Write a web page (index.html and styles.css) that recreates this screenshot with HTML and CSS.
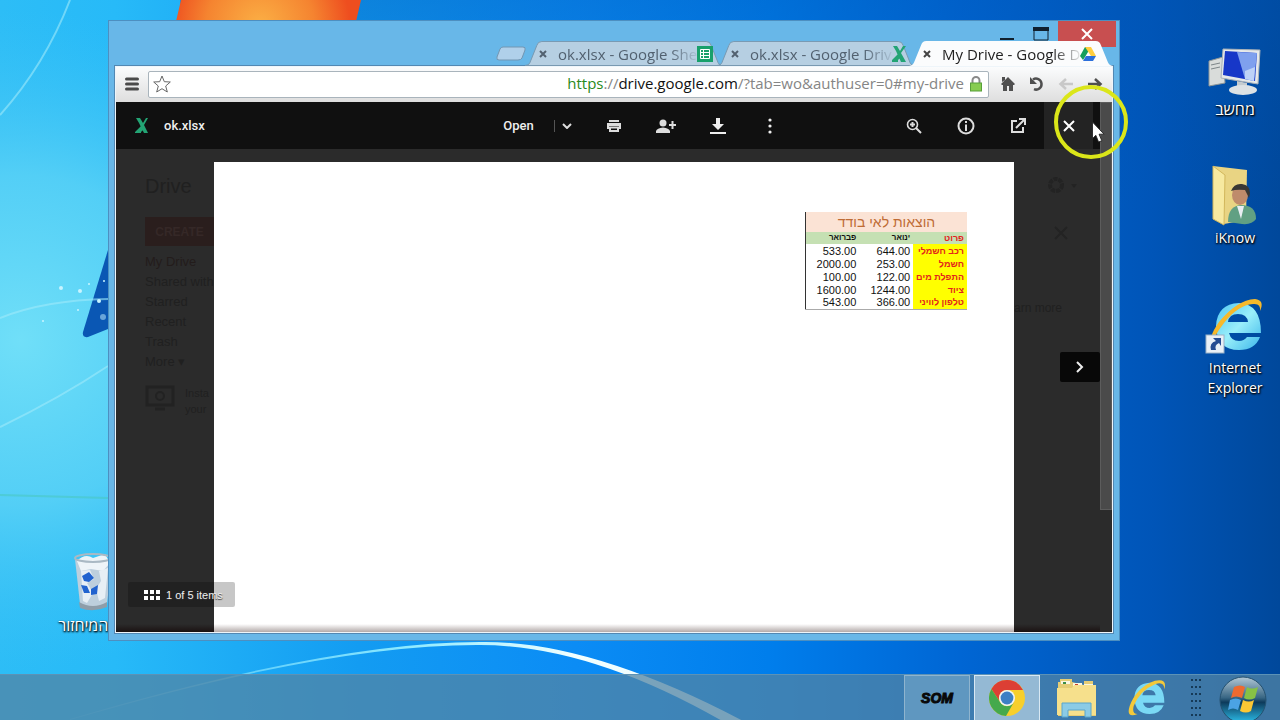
FILE: index.html
```html
<!DOCTYPE html>
<html lang="en">
<head>
<meta charset="utf-8">
<title>My Drive - Google Drive</title>
<link rel="stylesheet" href="styles.css">
</head>
<body>
<svg class="wallpaper" viewBox="0 0 1280 720" preserveAspectRatio="none" aria-hidden="true">
  <defs>
    <linearGradient id="sky" x1="0" y1="0" x2="1" y2="0">
      <stop offset="0" stop-color="#2dbdf6"/><stop offset=".09" stop-color="#27baf8"/><stop offset=".28" stop-color="#139cf2"/>
      <stop offset=".45" stop-color="#0b8cf5"/><stop offset=".6" stop-color="#007eec"/><stop offset=".75" stop-color="#0066d4"/>
      <stop offset=".9" stop-color="#0055b8"/><stop offset="1" stop-color="#00489b"/>
    </linearGradient>
    <linearGradient id="top" x1="0" y1="0" x2="0" y2="1">
      <stop offset="0" stop-color="#0055b4" stop-opacity=".35"/><stop offset=".3" stop-color="#0055b4" stop-opacity="0"/>
    </linearGradient>
    <radialGradient id="glow" gradientUnits="userSpaceOnUse" cx="20" cy="340" r="330">
      <stop offset="0" stop-color="#70dff8"/><stop offset=".5" stop-color="#5ad2f6" stop-opacity=".85"/><stop offset="1" stop-color="#3cc2f5" stop-opacity="0"/>
    </radialGradient>
    <radialGradient id="flame" gradientUnits="userSpaceOnUse" cx="260" cy="26" r="90">
      <stop offset="0" stop-color="#fbb045"/><stop offset=".6" stop-color="#f58430"/><stop offset="1" stop-color="#ee4e1f"/>
    </radialGradient>
    <linearGradient id="arc" x1="0" y1="0" x2="1" y2="0">
      <stop offset="0" stop-color="#8de6ff" stop-opacity=".2"/><stop offset=".5" stop-color="#8deaff"/><stop offset=".75" stop-color="#f2ffff"/><stop offset="1" stop-color="#eafaff"/>
    </linearGradient>
  </defs>
  <rect width="1280" height="720" fill="url(#sky)"/>
  <rect x="180" width="1100" height="720" fill="url(#top)"/>
  <rect width="400" height="720" fill="url(#glow)"/>
  <path d="M181 0h180l-7 30H174z" fill="url(#flame)"/>
  <path d="M108 250v79l-20 8q-6 1-5-5z" fill="#0a57b4"/>
  <g fill="none" stroke="#9eeafa" stroke-width="2">
    <path d="M70 0Q45 65 0 115" opacity=".6"/>
    <path d="M0 318Q45 300 108 299" opacity=".6"/>
    <path d="M0 427Q60 398 108 366" opacity=".6"/>
    <path d="M0 495L108 498" stroke="#48c8b8" opacity=".5"/>
  </g>
  <g fill="#c8f4ff"><circle cx="61" cy="288" r="2"/><circle cx="80" cy="291" r="2"/><circle cx="99" cy="301" r="2"/><circle cx="78" cy="310" r="1"/><circle cx="103" cy="317" r="3" opacity=".5"/><circle cx="89" cy="284" r="1"/><circle cx="104" cy="281" r="1"/><circle cx="43" cy="321" r="1"/></g>
  <path d="M70 719Q330 642 480 642Q590 640 745 722L724 722Q590 645 480 645Q330 644 70 720z" fill="url(#arc)"/>
</svg>

<main class="desktop">
  <figure class="shortcut shortcut-computer">
    <svg width="56" height="50" viewBox="0 0 56 50" aria-hidden="true">
      <path d="M2 14l14-4 2 26-16 3z" fill="#d9dcda" stroke="#8e9698"/><path d="M4 18l9-2M4 22l9-2" stroke="#7d8588"/>
      <path d="M30 34l10 2v8h-10z" fill="#c5cccf"/><ellipse cx="36" cy="43" rx="14" ry="5" fill="#dde2e4"/>
      <path d="M16 2l37 1-2 34-37-6z" fill="#e6e9ea" stroke="#a9b1b8"/><path d="M18 4l32 2-2 28-32-6z" fill="#1737c8"/><path d="M30 5l20 1-3 28-9-2z" fill="#7fa0ee"/><path d="M38 24l10-4-1 14-9-2z" fill="#bdd2f7"/>
    </svg>
    <figcaption lang="he">מחשב</figcaption>
  </figure>
  <figure class="shortcut shortcut-user">
    <svg width="50" height="62" viewBox="0 0 50 62" aria-hidden="true">
      <path d="M3 2l34 4-1 50-22 4z" fill="#e9d483"/><path d="M3 2l12 9-1 50L3 55z" fill="#f7e9a0" stroke="#d2b75c"/>
      <path d="M18 58q0-16 13-17q15 0 15 14q-4 6-14 5z" fill="#61a083"/><path d="M27 42l4 13 3-13z" fill="#e9eef3"/><ellipse cx="30" cy="31" rx="8" ry="10" fill="#bf8b6b"/><path d="M21 27q3-8 11-7q8 1 8 9l-1 5-4-8q-9-1-14 1z" fill="#393734"/>
    </svg>
    <figcaption>iKnow</figcaption>
  </figure>
  <figure class="shortcut shortcut-ie">
    <svg width="60" height="58" viewBox="0 0 60 58" aria-hidden="true">
      <defs><linearGradient id="ie" x1="0" y1="0" x2="1" y2="1"><stop offset="0" stop-color="#4fc6f2"/><stop offset=".5" stop-color="#9aeffa"/><stop offset="1" stop-color="#3ab5ea"/></linearGradient></defs>
      <path d="M56 36H24q2 8 10 8q5 0 8-4h13q-5 13-21 13Q12 53 11 29Q12 7 34 6q22 1 22 30zM23 25h20q-1-8-10-8t-10 8z" fill="url(#ie)" fill-rule="evenodd"/>
      <path d="M8 47Q2 42 14 25Q32 3 50 2q10 1 5 12q1-8-7-7Q33 8 19 26Q8 40 8 47z" fill="#f6b92b"/>
      <rect x="1" y="38" width="18" height="18" fill="#e9f0f6" stroke="#9cb2c6"/><path d="M6 53q-2-7 5-9l-3-3h8v8l-2-3q-5 2-3 7z" fill="#244c91"/>
    </svg>
    <figcaption>Internet Explorer</figcaption>
  </figure>
  <figure class="shortcut shortcut-bin">
    <svg width="42" height="60" viewBox="0 0 42 60" aria-hidden="true">
      <path d="M2 8l5 45q14 8 27 0l5-45z" fill="#bdcfdd"/><path d="M4 10q8-8 16-3l12-4 5 9-7 8-12-2-10 2z" fill="#eef4f8"/><path d="M6 51q14 8 28 0v5q-14 6-27 1z" fill="#8e9da9"/>
      <path d="M8 20l9-1 4 9-7 4 6 10-6 10-4-2zM26 20l9-3-3 30-6 3-3-12 5-8z" fill="#e7eff5"/>
      <path d="M9 25l7-4 5 6-5 4-5-1zM8 34l6 1 3 7h-6zM18 38l7-4-1 9-6 1z" fill="#2163cf"/><ellipse cx="20" cy="7" rx="18" ry="4" fill="none" stroke="#aab9c4" stroke-width="2"/>
    </svg>
    <figcaption lang="he">סל המיחזור</figcaption>
  </figure>

  <section class="window" aria-label="Browser window">
    <header class="titlebar">
      <div class="caption-buttons">
        <button aria-label="Minimize"><svg width="14" height="20" viewBox="0 0 14 20"><path d="M0 14h14v2H0z" fill="#10202e"/></svg></button>
        <button aria-label="Maximize"><svg width="16" height="14" viewBox="0 0 16 14"><path d="M1 1h14v12H1z" fill="none" stroke="#10202e"/><path d="M0 0h16v4H0z" fill="#10202e"/></svg></button>
        <button class="caption-close" aria-label="Close window"><svg width="12" height="12" viewBox="0 0 12 12"><path d="M1 1l10 10M11 1L1 11" stroke="#fff" stroke-width="2"/></svg></button>
      </div>
      <nav class="tabs" aria-label="Tabs">
        <button class="new-tab" aria-label="New tab"><svg width="32" height="16" viewBox="0 0 32 16"><path d="M8 1h20q3 0 2 3l-3 8q-1 2-4 2H4q-3 0-2-3l3-8q1-2 3-2z" fill="#b0d0ea" stroke="#7396b2"/></svg></button>
        <div class="tab">
          <svg class="tab-shape" viewBox="0 0 200 26" preserveAspectRatio="none"><path d="M0 25.500q4 0 5-3l7-18q1-4 5-4h166q4 0 5 4l7 18q1 3 5 3z" fill="#b6cfe2" stroke="#7898b0"/></svg>
          <button class="tab-close" aria-label="Close tab"><svg width="8" height="8" viewBox="0 0 8 8"><path d="M1 1l6 6M7 1L1 7" stroke="#526170" stroke-width="2"/></svg></button>
          <span class="tab-title">ok.xlsx - Google She</span>
          <svg width="16" height="16" viewBox="0 0 16 16"><path d="M0 0h16v16H0z" fill="#18a06b"/><path d="M3.500 3.500h9v9h-9zM3.500 6.500h9M3.500 9.500h9M6.500 3.500v9" fill="none" stroke="#fff"/></svg>
        </div>
        <div class="tab">
          <svg class="tab-shape" viewBox="0 0 200 26" preserveAspectRatio="none"><path d="M0 25.500q4 0 5-3l7-18q1-4 5-4h166q4 0 5 4l7 18q1 3 5 3z" fill="#b6cfe2" stroke="#7898b0"/></svg>
          <button class="tab-close" aria-label="Close tab"><svg width="8" height="8" viewBox="0 0 8 8"><path d="M1 1l6 6M7 1L1 7" stroke="#526170" stroke-width="2"/></svg></button>
          <span class="tab-title">ok.xlsx - Google Driv</span>
          <svg width="14" height="16" viewBox="0 0 14 16"><path d="M1 0h4l3 5 3-5h3L9 7l5 9H9L4 5zM6 8l2 4-2 2v2H0v-2z" fill="#22a474"/></svg>
        </div>
        <div class="tab tab-active">
          <svg class="tab-shape" viewBox="0 0 200 26" preserveAspectRatio="none"><path d="M0 26q4-1 5-4l7-18q1-4 5-4h166q4 0 5 4l7 18q1 3 5 4z" fill="#fbfcfd"/></svg>
          <button class="tab-close" aria-label="Close tab"><svg width="8" height="8" viewBox="0 0 8 8"><path d="M1 1l6 6M7 1L1 7" stroke="#444" stroke-width="2"/></svg></button>
          <span class="tab-title">My Drive - Google D</span>
          <svg width="16" height="16" viewBox="0 0 16 16"><path d="M5 1h6L5 11l-2 3-3-4z" fill="#159e5c"/><path d="M5 1h6l5 9h-5z" fill="#ffce3f"/><path d="M6 10h10l-3 5H3z" fill="#2b6fdb"/></svg>
        </div>
      </nav>
    </header>

    <div class="browser">
      <div class="toolbar">
        <button aria-label="Menu"><svg width="14" height="14" viewBox="0 0 14 14"><path d="M1.500 2h11M1.500 7h11M1.500 12h11" stroke="#4a4a4a" stroke-width="3" stroke-linecap="round"/></svg></button>
        <div class="omnibox">
          <button aria-label="Bookmark"><svg width="18" height="18" viewBox="0 0 18 18"><path d="M9 1l2.300 5.700 6 .3-4.600 4 1.600 6L9 13.700 3.700 17l1.600-6L.7 7l6-.3z" fill="#fff" stroke="#666"/></svg></button>
          <div class="url" role="textbox" aria-label="Address"><span class="url-scheme">https</span>://<span class="url-host">drive.google.com</span>/?tab=wo&amp;authuser=0#my-drive</div>
          <svg width="14" height="16" viewBox="0 0 14 16"><path d="M3.500 8V4.500a3.500 3.500 0 0 1 7 0V8" fill="none" stroke="#8a8a8a" stroke-width="2"/><rect x="1.500" y="7" width="11" height="8" fill="#87cc50" stroke="#58a03a"/></svg>
        </div>
        <div class="toolbar-nav">
          <button aria-label="Home"><svg width="16" height="16" viewBox="0 0 16 16"><path d="M8 1L1 8l1 1h1v6h4v-5h2v5h4V9h1l1-1zM2 1h3v3L2 6z" fill="#4f4f4f"/></svg></button>
          <button aria-label="Reload"><svg width="16" height="16" viewBox="0 0 16 16"><path d="M4 3.500A5.500 5.500 0 1 1 5 13.200" fill="none" stroke="#4f4f4f" stroke-width="2.500"/><path d="M1 1v7h7z" fill="#4f4f4f"/></svg></button>
          <button aria-label="Forward"><svg width="16" height="16" viewBox="0 0 16 16"><path d="M15 8H3M8 3L2.500 8 8 13" fill="none" stroke="#c8c8c8" stroke-width="2.500"/></svg></button>
          <button aria-label="Back"><svg width="16" height="16" viewBox="0 0 16 16"><path d="M1 8h12M8 3l5.500 5L8 13" fill="none" stroke="#4f4f4f" stroke-width="2.500"/></svg></button>
        </div>
      </div>

      <div class="viewer">
        <div class="viewer-bar">
          <div class="viewer-file">
            <svg width="14" height="16" viewBox="0 0 14 16"><path d="M1 0h4l3 5 3-5h2L9 7l4 8H9L4 5zM6 8l2 4-2 2v1H0v-1z" fill="#23a474"/></svg>
            <span>ok.xlsx</span>
          </div>
          <div class="viewer-actions">
            <button class="open-button">Open</button>
            <button class="open-more" aria-label="Open with"><svg width="10" height="6" viewBox="0 0 10 6"><path d="M1 1l4 4 4-4" fill="none" stroke="#ddd" stroke-width="2"/></svg></button>
            <button class="tool" aria-label="Print"><svg width="16" height="14" viewBox="0 0 16 14"><path d="M3 1h10v2H3zM1 4h14v6h-2V7H3v3H1z" fill="#ddd"/><path d="M4 8.500h8V12H4z" fill="none" stroke="#ddd" stroke-width="2"/></svg></button>
            <button class="tool" aria-label="Share"><svg width="20" height="14" viewBox="0 0 20 14"><circle cx="7" cy="4" r="3.500" fill="#ddd"/><path d="M0 14v-2q1-3 7-3.500 6 .5 7 3.500v2zM15.500 2h2v3h2.500v2h-2.500v3h-2V7H13V5h2.500z" fill="#ddd"/></svg></button>
            <button class="tool" aria-label="Download"><svg width="16" height="16" viewBox="0 0 16 16"><path d="M6 0h4v6h4l-6 6-6-6h4zM0 14h16v2H0z" fill="#eee"/></svg></button>
            <button class="tool" aria-label="More actions"><svg width="4" height="16" viewBox="0 0 4 16"><circle cx="2" cy="2" r="1.600" fill="#eee"/><circle cx="2" cy="8" r="1.600" fill="#eee"/><circle cx="2" cy="14" r="1.600" fill="#eee"/></svg></button>
          </div>
          <div class="viewer-end">
            <button class="tool" aria-label="Zoom"><svg width="16" height="16" viewBox="0 0 16 16"><circle cx="6.500" cy="6.500" r="5" fill="none" stroke="#ddd" stroke-width="1.600"/><path d="M6.500 4v5M4 6.500h5M10 10l5 5" stroke="#ddd" stroke-width="2"/></svg></button>
            <button class="tool" aria-label="Details"><svg width="18" height="18" viewBox="0 0 18 18"><circle cx="9" cy="9" r="7.500" fill="none" stroke="#ddd" stroke-width="2"/><path d="M8 4h2v2H8zM8 7.500h2V14H8z" fill="#ddd"/></svg></button>
            <button class="tool" aria-label="Open in new window"><svg width="16" height="16" viewBox="0 0 16 16"><path d="M7 3H2v11h11V9" fill="none" stroke="#ddd" stroke-width="2"/><path d="M9 1h6v6M15 1L6 10" fill="none" stroke="#ddd" stroke-width="2"/></svg></button>
            <button class="tool tool-close" aria-label="Close preview"><svg width="12" height="12" viewBox="0 0 12 12"><path d="M1 1l10 10M11 1L1 11" stroke="#fff" stroke-width="2"/></svg></button>
          </div>
        </div>

        <div class="stage">
          <aside class="backdrop backdrop-start">
            <h1>Drive</h1>
            <button class="create">CREATE</button>
            <ul>
              <li class="current">My Drive</li><li>Shared with</li><li>Starred</li><li>Recent</li><li>Trash</li><li>More ▾</li>
            </ul>
            <div class="promo">
              <svg width="30" height="26" viewBox="0 0 30 26"><path d="M2 2h26v18H2zM10 24h10" fill="none" stroke="#222" stroke-width="3"/><circle cx="15" cy="11" r="4" fill="none" stroke="#222" stroke-width="2"/></svg>
              <p>Insta<br>your</p>
            </div>
          </aside>
          <article class="sheet">
            <table dir="rtl" lang="he">
              <thead>
                <tr class="table-title"><th colspan="3">הוצאות לאי בודד</th></tr>
                <tr class="table-head"><th class="label">פרוט</th><th>ינואר</th><th>פברואר</th></tr>
              </thead>
              <tbody>
                <tr><th>רכב חשמלי</th><td>644.00</td><td>533.00</td></tr>
                <tr><th>חשמל</th><td>253.00</td><td>2000.00</td></tr>
                <tr><th>התפלת מים</th><td>122.00</td><td>100.00</td></tr>
                <tr><th>ציוד</th><td>1244.00</td><td>1600.00</td></tr>
                <tr><th>טלפון לוויני</th><td>366.00</td><td>543.00</td></tr>
              </tbody>
            </table>
          </article>
          <aside class="backdrop backdrop-end">
            <svg class="gear" width="34" height="20" viewBox="0 0 34 20"><circle cx="10" cy="10" r="6" fill="none" stroke="#232323" stroke-width="4" stroke-dasharray="4 1"/><path d="M25 9h6l-3 4z" fill="#232323"/></svg>
            <svg class="dismiss" width="14" height="14" viewBox="0 0 14 14"><path d="M1 1l12 12M13 1L1 13" stroke="#232323" stroke-width="2"/></svg>
            <p>arn more</p>
            <button class="next" aria-label="Next item"><svg width="10" height="14" viewBox="0 0 10 14"><path d="M2 2l5 5-5 5" fill="none" stroke="#eee" stroke-width="2"/></svg></button>
          </aside>
          <button class="counter"><svg width="16" height="10" viewBox="0 0 16 10"><path d="M0 0h4v4H0zM6 0h4v4H6zM12 0h4v4h-4zM0 6h4v4H0zM6 6h4v4H6zM12 6h4v4h-4z" fill="#fff"/></svg><span>1 of 5 items</span></button>
        </div>
        <div class="scroll-track"><div class="scroll-thumb"></div></div>
      </div>
    </div>
  </section>

  <div class="pointer-ring">
    <svg width="14" height="22" viewBox="0 0 12 20" aria-hidden="true"><path d="M1 1v15l3-3 2.500 6 3-1L7 12h4.500z" fill="#fff" stroke="#222" stroke-width=".8"/></svg>
  </div>
</main>

<footer class="taskbar">
  <button class="task task-som"><span>SOM</span></button>
  <button class="task task-active" aria-label="Chrome"><svg width="36" height="36" viewBox="0 0 36 36"><circle cx="18" cy="18" r="18" fill="#f7cf2c"/><path d="M2.400 9A18 18 0 0 1 34 10H18a8 8 0 0 0-7 12z" fill="#dc3f34"/><path d="M2.400 9A18 18 0 0 0 17 36l8-14a8 8 0 0 1-14 0z" fill="#45a94c"/><circle cx="18" cy="18" r="8" fill="#f0f4f5"/><circle cx="18" cy="18" r="6.400" fill="#3d80c4"/></svg></button>
  <button class="task" aria-label="File Explorer"><svg width="42" height="40" viewBox="0 0 42 40"><path d="M2 4h2V1h12v3l12 3V3h9v5h3v30H2z" fill="#e5cd75"/><path d="M5 3h9v3H5zM17 5h9v3h-9zM28 6h9v3h-9z" fill="#f9f6df"/><path d="M7 4h3v2H7z" fill="#3b8d4a"/><path d="M19 6h3v2h-3z" fill="#c9412f"/><path d="M1 10h15l2-3h22v30H1z" fill="#f6e08c"/><path d="M6 39V25h29v14h-6v-7H12v7z" fill="#8bcbe6" stroke="#5ba6cc"/></svg></button>
  <button class="task" aria-label="Internet Explorer"><svg width="40" height="40" viewBox="0 0 60 58"><path d="M56 36H24q2 8 10 8q5 0 8-4h13q-5 13-21 13Q12 53 11 29Q12 7 34 6q22 1 22 30zM23 25h20q-1-8-10-8t-10 8z" fill="#7ad9f5" fill-rule="evenodd"/><path d="M16 53Q-2 60 4 41Q14 13 42 3q19-4 14 13q0-12-13-8Q20 17 10 41q-3 12 6 12z" fill="#f3c93a"/></svg></button>
  <svg class="grip" width="12" height="42" viewBox="0 0 12 42" aria-hidden="true"><path d="M1 2v38M5 2v38M9 2v38" stroke="#163a57" stroke-width="2" stroke-dasharray="2 5"/></svg>
  <button class="start" aria-label="Start"><svg width="48" height="46" viewBox="0 0 48 46">
    <defs><linearGradient id="orb" x1="0" y1="0" x2="0" y2="1"><stop offset="0" stop-color="#b3c8d5"/><stop offset=".45" stop-color="#386684"/><stop offset=".55" stop-color="#0d3a5b"/><stop offset="1" stop-color="#2cc0ec"/></linearGradient></defs>
    <circle cx="24" cy="25" r="23" fill="url(#orb)" stroke="#25516f"/><path d="M15 12q6-3 11 0l-3 11q-6-3-11 0z" fill="#ee6a30"/><path d="M28 12q5 3 11 0l-3 11q-6 3-11 0z" fill="#87c145"/><path d="M11 25q6-3 11 0l-3 10q-5-3-10 0z" fill="#4ba3e4"/><path d="M24 25q6 3 11 0l-3 11q-5 3-11 0z" fill="#fbc734"/></svg></button>
</footer>
</body>
</html>
```

FILE: styles.css
```css
* { box-sizing: border-box; }

body {
  margin: 0;
  height: 100vh;
  min-height: 480px;
  display: flex;
  flex-direction: column;
  overflow: hidden;
  position: relative;
  font-family: "Open Sans", "Noto Sans", "Liberation Sans", sans-serif;
  background: #0b8cf5;
}

button {
  display: flex;
  align-items: center;
  justify-content: center;
  margin: 0;
  padding: 0;
  border: 0;
  background: none;
  color: inherit;
  font: inherit;
}

svg { display: block; flex: none; }

.wallpaper {
  position: absolute;
  inset: 0;
  width: 100%;
  height: 100%;
}

.desktop { flex: 1; position: relative; min-height: 0; }

/* Desktop shortcuts */
.shortcut {
  position: absolute;
  width: 80px;
  margin: 0;
  display: flex;
  flex-direction: column;
  align-items: center;
  gap: 2px;
  color: #fff;
  font-size: 14px;
  line-height: 20px;
  text-align: center;
  text-shadow: 1px 1px 2px #000, 0 1px 2px #000;
}
.shortcut figcaption:lang(he) { font-size: 16px; }
.shortcut-computer { top: 47px; right: 5px; }
.shortcut-user { top: 164px; right: 5px; }
.shortcut-ie { top: 297px; right: 5px; gap: 3px; }
.shortcut-bin { top: 551px; left: 54px; gap: 4px; white-space: nowrap; }

/* Browser window */
.window {
  position: absolute;
  inset: 20px 160px 33px 108px;
  display: flex;
  flex-direction: column;
  padding: 0 6px 7px;
  border: 1px solid #4d8fc0;
  background: #68b7e8;
}

.titlebar { display: grid; height: 45px; flex: none; }
.caption-buttons {
  grid-area: 1 / 1;
  justify-self: end;
  align-self: start;
  display: flex;
  height: 26px;
}
.caption-buttons button { width: 34px; }
.caption-buttons .caption-close { width: 58px; background: #c84f50; margin-right: -3px; }

.tabs {
  grid-area: 1 / 1;
  align-self: end;
  justify-self: end;
  display: flex;
  align-items: center;
  z-index: 1;
  font-size: 15px;
}
.new-tab { margin-right: -2px; }
.tab {
  position: relative;
  isolation: isolate;
  display: flex;
  align-items: center;
  gap: 11px;
  width: 198px;
  height: 25px;
  padding: 0 14px;
  margin-right: -6px;
  color: #526170;
}
.tab-active { width: 204px; margin-right: 0; padding-right: 16px; color: #222; z-index: 1; }
.tab-shape { position: absolute; inset: 0; width: 100%; height: 100%; z-index: -1; }
.tab-close { width: 8px; flex: none; }
.tab-title {
  white-space: nowrap;
  line-height: 22px;
  margin-right: -11px;
  mask-image: linear-gradient(to right, #000 80%, rgba(0, 0, 0, .1));
}

.browser {
  flex: 1;
  min-height: 0;
  display: flex;
  flex-direction: column;
  border: 1px solid #eef5fa;
  outline: 1px solid #5288b3;
}

.toolbar {
  display: flex;
  align-items: center;
  gap: 9px;
  height: 35px;
  flex: none;
  padding: 0 9px 1px;
  background: linear-gradient(#fbfcfd, #dedede);
}
.omnibox {
  flex: 1;
  display: flex;
  align-items: center;
  height: 27px;
  padding: 0 5px 0 4px;
  gap: 5px;
  border: 1px solid #a9b4bc;
  border-radius: 2px;
  background: #fff;
}
.url { flex: 1; padding-bottom: 2px; text-align: right; font-size: 15px; line-height: 22px; color: #858585; white-space: nowrap; }
.url-scheme { color: #2a8a20; }
.url-host { color: #111; }
.toolbar-nav { display: flex; gap: 13px; padding-left: 2px; }

/* File preview */
.viewer {
  flex: 1;
  min-height: 0;
  display: grid;
  grid-template: auto 1fr / 1fr 12px;
  background: #2b2b2b;
  color: #eee;
  font-family: Roboto, "Liberation Sans", sans-serif;
  font-size: 13px;
}
.viewer-bar {
  display: flex;
  align-items: center;
  height: 47px;
  background: #101010;
  padding-right: 7px;
}
.viewer-file {
  flex: 368 1 0;
  display: flex;
  align-items: center;
  gap: 15px;
  padding-left: 19px;
  font-weight: 500;
}
.viewer-actions, .viewer-end { display: flex; align-items: center; height: 100%; }
.viewer-end { flex: 297 1 0; justify-content: flex-end; }
.tool { width: 52px; height: 100%; }
.tool-close { width: 49px; background: #232323; }
.open-button { width: 31px; margin-right: 20px; font-weight: 500; }
.open-more { width: 34px; height: 12px; padding-right: 10px; border-left: 1px solid #555; }

.stage {
  position: relative;
  display: grid;
  grid-template-columns: 98px 1fr 86px;
  min-height: 0;
  overflow: hidden;
}
.backdrop {
  color: #202020;
  overflow: hidden;
  font-family: "Liberation Sans", sans-serif;
  background: linear-gradient(to top, #1b1212, transparent 8px);
}
.backdrop-start { padding: 25px 0 0 29px; white-space: nowrap; }
.backdrop h1 { margin: 0; font-size: 20px; line-height: 24px; font-weight: 400; }
.create { width: 69px; height: 29px; margin: 19px 0 6px; background: #2a1e1d; color: #352827; font-size: 12px; font-weight: 700; }
.backdrop ul { list-style: none; margin: 0; padding: 0; font-size: 13px; line-height: 20px; }
.backdrop .current { color: #231c1b; }
.promo { display: flex; gap: 10px; margin-top: 13px; font-size: 11px; line-height: 16px; }
.promo p { margin: 0; }

.sheet {
  margin-top: 13px;
  padding: 50px 47px 0 0;
  background: linear-gradient(to top, #b3aaa9, #fff 8px);
}
.sheet table {
  width: 162px;
  margin-left: auto;
  table-layout: fixed;
  border-collapse: collapse;
  border-left: 1px solid #333;
  border-bottom: 1px solid #aaa;
  color: #111;
  font-family: "Liberation Sans", sans-serif;
  font-size: 11px;
  line-height: 12px;
}
.sheet th, .sheet td { height: 13px; padding: 0 3px; text-align: right; white-space: nowrap; }
.sheet td { direction: ltr; }
.sheet tbody th { background: #ff0; color: #e3231b; font-size: 9px; }
.sheet .table-title th { height: 20px; text-align: center; background: #fbe3d5; color: #bf6c35; font-size: 14px; font-weight: 400; }
.sheet .table-head th { height: 12px; background: #c5e0b3; font-size: 8px; }
.sheet .table-head .label { width: 56px; color: #e3231b; font-size: 9px; }

.backdrop-end { display: flex; flex-direction: column; align-items: flex-start; }
.gear { margin: 26px 0 0 32px; }
.dismiss { margin: 31px 0 0 40px; }
.backdrop-end p { margin: 60px 0 0; font-size: 12px; line-height: 16px; white-space: nowrap; }
.next { width: 40px; height: 30px; flex: none; margin-top: 36px; align-self: flex-end; border-radius: 2px; background: #080808; }

/* Item counter floats over the page edge */
.counter {
  position: absolute;
  left: 12px;
  bottom: 25px;
  height: 25px;
  padding: 0 12px 0 16px;
  gap: 6px;
  border-radius: 2px;
  background: rgba(0, 0, 0, .22);
  font-family: "Liberation Sans", sans-serif;
  font-size: 11px;
  text-shadow: 0 1px 1px #333;
}

.scroll-track { grid-area: 1 / 2 / 3 / 3; background: #2b2b2b; }
.scroll-thumb { height: 77%; background: #4a4a4a; border: 1px solid #5c5c5c; }

.pointer-ring {
  position: absolute;
  top: 85px;
  right: 152px;
  width: 74px;
  height: 74px;
  border: 4px solid #dbe619;
  border-radius: 50%;
  padding: 32px 0 0 33px;
}

/* Taskbar */
.taskbar {
  position: relative;
  display: flex;
  align-items: center;
  justify-content: flex-end;
  gap: 4px;
  height: 46px;
  flex: none;
  padding-right: 13px;
  overflow: hidden;
  background: rgba(82, 132, 164, .75);
  border-top: 1px solid #5c92b6;
}
.task { width: 66px; height: 100%; }
.task-som { border: 1px solid #8fb4ce; border-bottom: 0; background: #5f97c0; color: #080808; font-family: "Liberation Sans", sans-serif; font-size: 14px; font-style: italic; font-weight: 700; -webkit-text-stroke: 1px #080808; }
.task-active { border: 1px solid #d8e8f3; border-bottom: 0; background: #94b9d4; }
.grip { margin: 0 12px 0 7px; }
```
